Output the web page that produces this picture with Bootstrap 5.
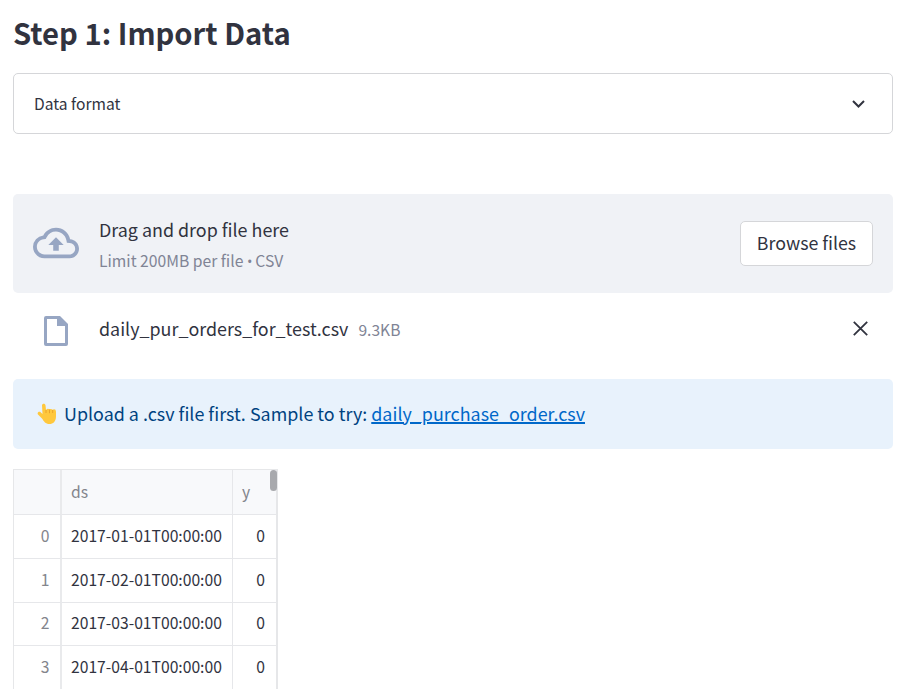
<!DOCTYPE html>
<html lang="en">
<head>
<meta charset="utf-8">
<meta name="viewport" content="width=device-width, initial-scale=1">
<title>Import Data</title>
<link href="https://cdn.jsdelivr.net/npm/bootstrap@5.3.0/dist/css/bootstrap.min.css" rel="stylesheet">
<style>
body{font-family:"Noto Sans CJK SC","Noto Sans",sans-serif;color:#31333f;height:689px;overflow:hidden;background:#fff}
svg{display:block;flex:none}
.page{padding:0 9px 0 13px}
.title{font-size:29.2px;line-height:42px;font-weight:700;margin:11px 0 20px;white-space:nowrap}
.expander{height:61px;border:1px solid #d5d6d9;border-radius:5px;padding:0 26px 0 20px;font-size:15.6px;margin-bottom:60px}
.drop{height:99px;background:#f0f2f6;border-radius:5px;padding:0 20px}
.drop-icon{margin:0 20px 2px 0}
.drop-main{font-size:17.9px;line-height:30px}
.limit{font-size:15.7px;line-height:26px;color:#808495;margin-top:4px;margin-bottom:-1px}
.dot{font-family:"Open Sans",sans-serif;font-size:14.5px;letter-spacing:-.5px}
.browse{width:133px;height:45px;border:1px solid #d5d6d9;border-radius:5px;background:#fff;color:#31333f;font-size:17.8px;line-height:30px;padding:0 0 4px}
.file-line{height:86px;padding:0 25px 12px 31px;font-size:17.9px}
.file-icon{margin:2px 31px 0 0}
.fname,.remove{margin-bottom:4px}
.fsize{font-size:15.6px;color:#808495;margin-left:10px}
.notice{height:70px;border-radius:5px;background:#e8f2fc;color:#004280;font-size:17.9px;padding:0 0 0 24px;margin-bottom:20px}
.notice-text{margin:0 0 2px 7px;letter-spacing:.01px}
.notice a{color:#0068c9;text-decoration-thickness:2px;text-underline-offset:1px}
.t-text{white-space:nowrap}
.grid-wrap{width:265px;height:225px;position:relative;border:1px solid #e6e7e9;border-right-width:2px}
.frame{width:262px;table-layout:fixed;border-collapse:separate;border-spacing:0;font-size:15.7px;line-height:20px}
.frame th,.frame td{height:43.8px;padding:0 9px 1px;border-bottom:1px solid #e6e7ea;border-right:1px solid #e6e7ea;vertical-align:middle;font-weight:400}
.frame tr:nth-child(n+3) td{padding-bottom:2px}
.frame th{background:#f8f9fb;color:#83858c;height:45px}
.frame th:first-child,.frame td:first-child{border-right:2px solid #e9eaec;color:#83858c;text-align:right;padding-right:10.5px}
.frame th:last-child,.frame td:last-child{border-right:0}
.frame td:last-child{text-align:right;padding-right:11px}
.thumb{position:absolute;right:-1px;top:0;width:7px;height:21px;border-radius:4px;background:#a8a9ad}
</style>
<script src="https://cdn.jsdelivr.net/npm/bootstrap@5.3.0/dist/js/bootstrap.bundle.min.js"></script>
</head>
<body>
<main class="page d-flex flex-column">
  <h1 class="title">Step 1: Import Data</h1>

  <div class="expander d-flex align-items-center justify-content-between">
    <span class="t-text">Data format</span>
    <svg width="15" height="10" viewBox="0 0 15 10" fill="none" stroke="#31333f" stroke-width="2"><path d="M2 2l5.500 5.500L13 2"/></svg>
  </div>

  <section class="drop d-flex align-items-center">
    <svg class="drop-icon" width="46" height="46" viewBox="0 0 24 24" fill="#97a6c3"><path d="M19.35 10.04A7.49 7.49 0 0 0 12 4C9.11 4 6.6 5.64 5.35 8.04A5.994 5.994 0 0 0 0 14c0 3.31 2.69 6 6 6h13c2.76 0 5-2.24 5-5 0-2.64-2.05-4.78-4.65-4.96zM19 18H6c-2.21 0-4-1.79-4-4 0-2.05 1.53-3.76 3.56-3.97l1.07-.11.5-.95A5.469 5.469 0 0 1 12 6c2.62 0 4.88 1.86 5.39 4.43l.3 1.5 1.53.11A2.98 2.98 0 0 1 22 15c0 1.65-1.35 3-3 3zM8 13h2.55v3h2.9v-3H16l-4-4z"/></svg>
    <div class="flex-grow-1 t-text">
      <div class="drop-main">Drag and drop file here</div>
      <div class="limit">Limit 200MB per file <span class="dot">•</span> CSV</div>
    </div>
    <button class="btn browse" type="button">Browse files</button>
  </section>

  <div class="file-line d-flex align-items-center">
    <svg class="file-icon" width="24" height="30" viewBox="0 0 24 30"><path fill="#97a6c3" fill-rule="evenodd" d="M2 0H16L24 8V28Q24 30 22 30H2Q0 30 0 28V2Q0 0 2 0ZM3 3V27H21V10H13V3Z"/></svg>
    <span class="t-text fname">daily_pur_orders_for_test.csv</span>
    <span class="fsize">9.3KB</span>
    <svg class="ms-auto remove" width="15" height="15" viewBox="0 0 15 15" stroke="#31333f" stroke-width="1.8"><path d="M.8.8l13.4 13.4M14.2.8L.8 14.2"/></svg>
  </div>

  <div class="notice d-flex align-items-center">
    <svg width="20" height="22" viewBox="0 0 20 22"><path fill="#ffc83d" d="M5 2.300C5 .2 8.400.2 8.500 2.300L9 7Q10.500 5 12.500 6.300Q14 5.300 15.500 6.700Q18.900 5.500 19 8.700V13.500C19 18.500 16 21 12.500 21C8.500 21 7 18.500 5 15.500L1 11.500C-.3 9.700 2 8 3.600 9.200L5.500 11Z"/><path d="M9 7v3M12.500 6.500v3.700M15.700 7v3" fill="none" stroke="#e59a28" stroke-width=".8"/></svg>
    <span class="t-text notice-text">Upload a .csv file first. Sample to try: <a href="#">daily_purchase_order.csv</a></span>
  </div>

  <div class="grid-wrap">
    <table class="frame">
      <colgroup><col style="width:48px"><col style="width:171px"><col style="width:43px"></colgroup>
      <thead><tr><th></th><th>ds</th><th>y</th></tr></thead>
      <tbody>
        <tr><td>0</td><td>2017-01-01T00:00:00</td><td>0</td></tr>
        <tr><td>1</td><td>2017-02-01T00:00:00</td><td>0</td></tr>
        <tr><td>2</td><td>2017-03-01T00:00:00</td><td>0</td></tr>
        <tr><td>3</td><td>2017-04-01T00:00:00</td><td>0</td></tr>
      </tbody>
    </table>
    <div class="thumb"></div>
  </div>
</main>
</body>
</html>
